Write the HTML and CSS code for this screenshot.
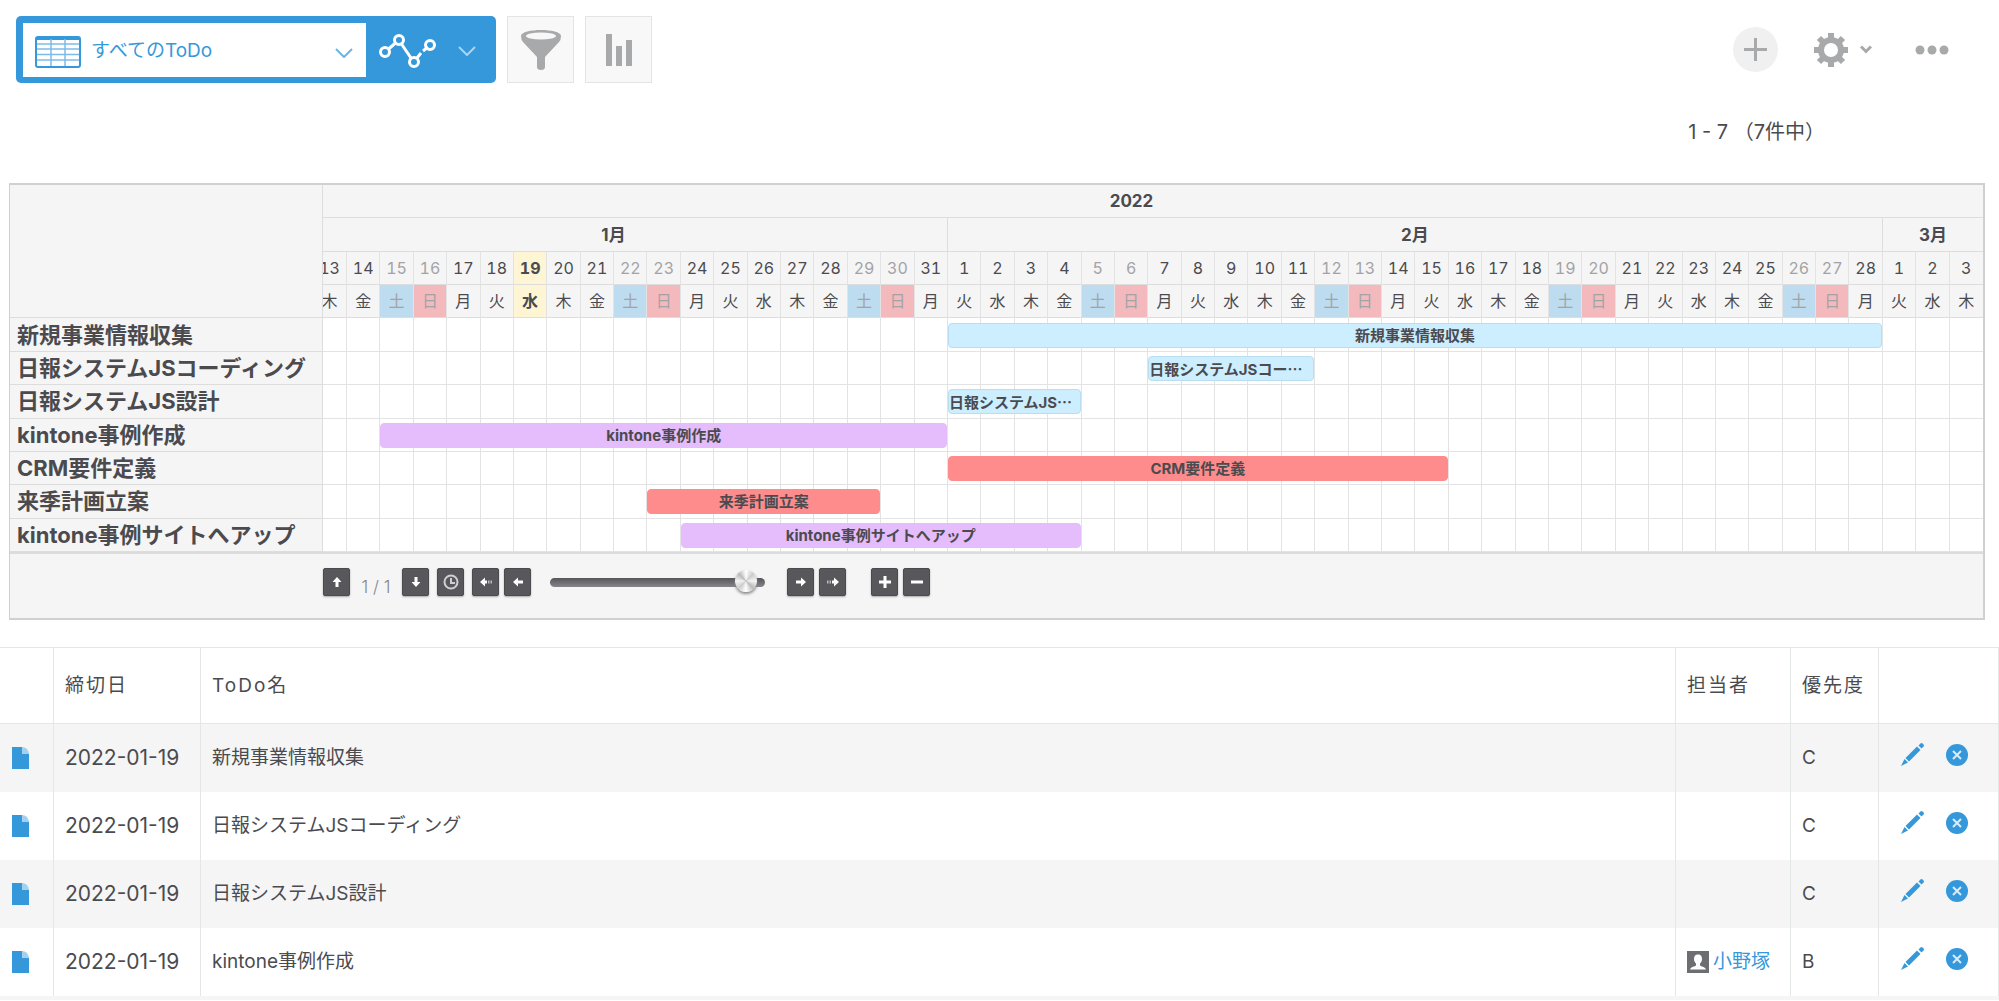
FILE: index.html
```html
<!DOCTYPE html>
<html lang="ja">
<head>
<meta charset="utf-8">
<title>すべてのToDo</title>
<link rel="stylesheet" href="styles.css">
</head>
<body>
<svg class="defs" aria-hidden="true">
  <symbol id="chevron" viewBox="0 0 18 10"><path d="M1 1l8 8 8-8" fill="none" stroke="currentColor" stroke-width="2"/></symbol>
  <symbol id="doc" viewBox="0 0 17 22"><path d="M0 0h10l7 7v15H0z" fill="#3498db"/><path d="M10 0q6 0 7 7h-7z" fill="#a5d1ef"/></symbol>
  <symbol id="pencil" viewBox="0 0 23 23"><g fill="#3498db"><path d="M17.500 2.500l2-2q1-1 2 0l1 1q1 1 0 2l-2 2z"/><path d="M16 3.500l3.500 3.500L8 18.500 4.500 15z"/><path d="M3.500 16l3.500 3.500L0 23z"/></g></symbol>
  <symbol id="delete" viewBox="0 0 22 22"><circle cx="11" cy="11" r="11" fill="#3498db"/><path d="M7 7l8 8M15 7l-8 8" stroke="#d9ecf9" stroke-width="2"/></symbol>
  <symbol id="arrow" viewBox="0 0 10 10"><path d="M5 0l4.500 5H6.500v5h-3V5H.5z" fill="#fff"/></symbol>
  <symbol id="arrow-dotted" viewBox="0 0 12 12"><path d="M6 0l4.500 5H7.500v2h-3V5H1.500z" fill="#fff"/><path d="M4.500 8h3v1.500h-3zM4.500 10.500h3V12h-3z" fill="#bbb"/></symbol>
</svg>

<header class="toolbar">
  <div class="view-box">
    <div class="view-picker">
      <svg class="view-icon" viewBox="0 0 46 32"><rect x="1" y="1" width="44" height="30" rx="2" fill="#fff" stroke="#3498db" stroke-width="2"/><path d="M2 3h42" stroke="#3498db" stroke-width="2"/><path d="M2 8h42M2 13h42M2 18.500h42M2 24h42M16 3v27M30 3v27" stroke="#7dbce8" stroke-width="1.500"/></svg>
      <select class="view-select" aria-label="一覧"><option>すべてのToDo</option></select>
      <svg class="chevron view-chevron"><use href="#chevron"/></svg>
    </div>
    <button class="graph-button" aria-label="グラフ">
      <svg width="57" height="34" viewBox="0 0 57 34" fill="none" stroke="#fff" stroke-width="3"><path d="M9 15.500l8-7M22.500 10l9.500 14M38 24l4-5M44 17l5-4"/><circle cx="6" cy="18" r="4.500"/><circle cx="20" cy="6" r="4.500"/><circle cx="35" cy="28" r="4.500"/><circle cx="51" cy="11" r="4.500"/></svg>
      <svg class="chevron"><use href="#chevron"/></svg>
    </button>
  </div>
  <button class="tool-button" aria-label="絞り込み">
    <svg width="40" height="40" viewBox="0 0 40 40"><path d="M0 6C0-2 40-2 40 6q0 4-2 6L24 27v10q0 3-4 3t-4-3V27L2 12Q0 10 0 6z" fill="#a8a9aa"/><ellipse cx="20" cy="6" rx="15" ry="3.500" fill="#f8f8f8"/></svg>
  </button>
  <button class="tool-button" aria-label="集計">
    <svg width="26" height="32" viewBox="0 0 26 32"><path d="M0 0h6v32H0zM10 12h6v20h-6zM20 6h6v26h-6z" fill="#a8a9aa"/></svg>
  </button>
  <div class="actions">
    <button class="add-button" aria-label="追加"><svg width="23" height="23" viewBox="0 0 23 23"><path d="M11.500 0v23M0 11.500h23" stroke="#a8a9aa" stroke-width="3"/></svg></button>
    <button class="plain-button" aria-label="設定">
      <svg width="34" height="34" viewBox="0 0 34 34"><g stroke="#a8a9aa" stroke-width="6"><path d="M17 0v34M0 17h34M5 5l24 24M29 5L5 29"/></g><circle cx="17" cy="17" r="13" fill="#a8a9aa"/><circle cx="17" cy="17" r="7" fill="#fff"/></svg>
      <svg width="12" height="9" viewBox="0 0 12 9"><path d="M1 1.500l5 5 5-5" fill="none" stroke="#a8a9aa" stroke-width="3"/></svg>
    </button>
    <button class="plain-button" aria-label="その他"><svg width="34" height="10" viewBox="0 0 34 10" fill="#a8a9aa"><circle cx="5" cy="5" r="4.500"/><circle cx="17" cy="5" r="4.500"/><circle cx="29" cy="5" r="4.500"/></svg></button>
  </div>
</header>

<p class="pager">1 - 7 （7件中）</p>

<section class="gantt">
  <div class="chart">
    <div class="corner"></div>
    <div class="period year">2022</div>
    <div class="period jan">1月</div>
    <div class="period feb">2月</div>
    <div class="period mar">3月</div>

    <div class="label r1">新規事業情報収集</div><div class="track r1"></div>
    <div class="label r2">日報システムJSコーディング</div><div class="track r2"></div>
    <div class="label r3">日報システムJS設計</div><div class="track r3"></div>
    <div class="label r4">kintone事例作成</div><div class="track r4"></div>
    <div class="label r5">CRM要件定義</div><div class="track r5"></div>
    <div class="label r6">来季計画立案</div><div class="track r6"></div>
    <div class="label r7">kintone事例サイトへアップ</div><div class="track r7"></div>

    <div class="days">
      <div class="day first"><span>13</span><span>木</span></div>
      <div class="day"><span>14</span><span>金</span></div>
      <div class="day sat"><span>15</span><span>土</span></div>
      <div class="day sun"><span>16</span><span>日</span></div>
      <div class="day"><span>17</span><span>月</span></div>
      <div class="day"><span>18</span><span>火</span></div>
      <div class="day today"><span>19</span><span>水</span></div>
      <div class="day"><span>20</span><span>木</span></div>
      <div class="day"><span>21</span><span>金</span></div>
      <div class="day sat"><span>22</span><span>土</span></div>
      <div class="day sun"><span>23</span><span>日</span></div>
      <div class="day"><span>24</span><span>月</span></div>
      <div class="day"><span>25</span><span>火</span></div>
      <div class="day"><span>26</span><span>水</span></div>
      <div class="day"><span>27</span><span>木</span></div>
      <div class="day"><span>28</span><span>金</span></div>
      <div class="day sat"><span>29</span><span>土</span></div>
      <div class="day sun"><span>30</span><span>日</span></div>
      <div class="day"><span>31</span><span>月</span></div>
      <div class="day"><span>1</span><span>火</span></div>
      <div class="day"><span>2</span><span>水</span></div>
      <div class="day"><span>3</span><span>木</span></div>
      <div class="day"><span>4</span><span>金</span></div>
      <div class="day sat"><span>5</span><span>土</span></div>
      <div class="day sun"><span>6</span><span>日</span></div>
      <div class="day"><span>7</span><span>月</span></div>
      <div class="day"><span>8</span><span>火</span></div>
      <div class="day"><span>9</span><span>水</span></div>
      <div class="day"><span>10</span><span>木</span></div>
      <div class="day"><span>11</span><span>金</span></div>
      <div class="day sat"><span>12</span><span>土</span></div>
      <div class="day sun"><span>13</span><span>日</span></div>
      <div class="day"><span>14</span><span>月</span></div>
      <div class="day"><span>15</span><span>火</span></div>
      <div class="day"><span>16</span><span>水</span></div>
      <div class="day"><span>17</span><span>木</span></div>
      <div class="day"><span>18</span><span>金</span></div>
      <div class="day sat"><span>19</span><span>土</span></div>
      <div class="day sun"><span>20</span><span>日</span></div>
      <div class="day"><span>21</span><span>月</span></div>
      <div class="day"><span>22</span><span>火</span></div>
      <div class="day"><span>23</span><span>水</span></div>
      <div class="day"><span>24</span><span>木</span></div>
      <div class="day"><span>25</span><span>金</span></div>
      <div class="day sat"><span>26</span><span>土</span></div>
      <div class="day sun"><span>27</span><span>日</span></div>
      <div class="day"><span>28</span><span>月</span></div>
      <div class="day"><span>1</span><span>火</span></div>
      <div class="day"><span>2</span><span>水</span></div>
      <div class="day"><span>3</span><span>木</span></div>
    </div>

    <div class="bar blue r1" style="grid-column: 21 / 49">新規事業情報収集</div>
    <div class="bar blue cut r2" style="grid-column: 27 / 32">日報システムJSコー<span class="dots">…</span></div>
    <div class="bar blue cut r3" style="grid-column: 21 / 25">日報システムJS<span class="dots">…</span></div>
    <div class="bar purple r4" style="grid-column: 4 / 21">kintone事例作成</div>
    <div class="bar red r5" style="grid-column: 21 / 36">CRM要件定義</div>
    <div class="bar red r6" style="grid-column: 12 / 19">来季計画立案</div>
    <div class="bar purple r7" style="grid-column: 13 / 25">kintone事例サイトへアップ</div>
  </div>

  <div class="nav">
    <button class="nav-button" aria-label="前のページ"><svg width="10" height="10"><use href="#arrow"/></svg></button>
    <span class="page-no">1 / 1</span>
    <button class="nav-button" aria-label="次のページ"><svg class="down" width="10" height="10"><use href="#arrow"/></svg></button>
    <button class="nav-button apart" aria-label="今日"><svg width="16" height="16" viewBox="0 0 16 16" fill="none" stroke="#d0d0d2" stroke-width="2"><circle cx="8" cy="8" r="6.500"/><path d="M8 4v5h4"/></svg></button>
    <button class="nav-button apart" aria-label="前の週"><svg class="left" width="12" height="12"><use href="#arrow-dotted"/></svg></button>
    <button class="nav-button" aria-label="前の日"><svg class="left" width="10" height="10"><use href="#arrow"/></svg></button>
    <input class="slider" type="range" min="0" max="100" value="96" aria-label="表示位置">
    <button class="nav-button" aria-label="次の日"><svg class="right" width="10" height="10"><use href="#arrow"/></svg></button>
    <button class="nav-button" aria-label="次の週"><svg class="right" width="12" height="12"><use href="#arrow-dotted"/></svg></button>
    <button class="nav-button zoom-in" aria-label="拡大"><svg width="12" height="12" viewBox="0 0 12 12"><path d="M6 0v12M0 6h12" stroke="#fff" stroke-width="3"/></svg></button>
    <button class="nav-button" aria-label="縮小"><svg width="12" height="12" viewBox="0 0 12 12"><path d="M0 6h12" stroke="#fff" stroke-width="3"/></svg></button>
  </div>
</section>

<table class="records">
  <colgroup><col class="c-doc"><col class="c-date"><col><col class="c-user"><col class="c-rank"><col class="c-edit"></colgroup>
  <thead>
    <tr><th></th><th>締切日</th><th>ToDo名</th><th>担当者</th><th>優先度</th><th></th></tr>
  </thead>
  <tbody>
    <tr>
      <td class="doc"><a href="#r7" aria-label="詳細"><svg width="17" height="22"><use href="#doc"/></svg></a></td>
      <td class="date">2022-01-19</td><td>新規事業情報収集</td><td></td><td>C</td>
      <td><div class="row-tools"><button class="plain-button" aria-label="編集"><svg width="23" height="23"><use href="#pencil"/></svg></button><button class="plain-button" aria-label="削除"><svg width="22" height="22"><use href="#delete"/></svg></button></div></td>
    </tr>
    <tr>
      <td class="doc"><a href="#r6" aria-label="詳細"><svg width="17" height="22"><use href="#doc"/></svg></a></td>
      <td class="date">2022-01-19</td><td>日報システムJSコーディング</td><td></td><td>C</td>
      <td><div class="row-tools"><button class="plain-button" aria-label="編集"><svg width="23" height="23"><use href="#pencil"/></svg></button><button class="plain-button" aria-label="削除"><svg width="22" height="22"><use href="#delete"/></svg></button></div></td>
    </tr>
    <tr>
      <td class="doc"><a href="#r5" aria-label="詳細"><svg width="17" height="22"><use href="#doc"/></svg></a></td>
      <td class="date">2022-01-19</td><td>日報システムJS設計</td><td></td><td>C</td>
      <td><div class="row-tools"><button class="plain-button" aria-label="編集"><svg width="23" height="23"><use href="#pencil"/></svg></button><button class="plain-button" aria-label="削除"><svg width="22" height="22"><use href="#delete"/></svg></button></div></td>
    </tr>
    <tr>
      <td class="doc"><a href="#r4" aria-label="詳細"><svg width="17" height="22"><use href="#doc"/></svg></a></td>
      <td class="date">2022-01-19</td><td>kintone事例作成</td>
      <td><a class="user" href="#user"><svg width="22" height="22" viewBox="0 0 22 22"><path d="M0 0h22v22H0z" fill="#6d6e72"/><path d="M11 3.500c3 0 4 2 4 4.500 0 2-1 3.500-2 4.500v2c1 1 5 1 6 4H3c1-3 5-3 6-4v-2C8 11.500 7 10 7 8c0-2.500 1-4.500 4-4.500z" fill="#fff"/></svg>小野塚</a></td>
      <td>B</td>
      <td><div class="row-tools"><button class="plain-button" aria-label="編集"><svg width="23" height="23"><use href="#pencil"/></svg></button><button class="plain-button" aria-label="削除"><svg width="22" height="22"><use href="#delete"/></svg></button></div></td>
    </tr>
  </tbody>
</table>
</body>
</html>
```
FILE: styles.css
```css
* { box-sizing: border-box; }

body {
  margin: 0;
  background: #fff;
  color: #4b4b4f;
  font: 19px/28px Inter, "Noto Sans CJK JP", sans-serif;
}

button, select {
  margin: 0;
  padding: 0;
  border: 0;
  background: none;
  color: inherit;
  font: inherit;
}

svg { display: block; flex: none; }
a { color: #3498db; text-decoration: none; }
.defs { position: absolute; width: 0; height: 0; }

/* toolbar */
.toolbar {
  display: flex;
  padding: 16px 50px 0 16px;
}

.view-box {
  display: flex;
  width: 480px;
  height: 67px;
  padding: 7px 0 6px 7px;
  border-radius: 5px;
  background: #3498db;
}

.view-picker { position: relative; width: 343px; background: #fff; }

.view-select {
  width: 100%;
  height: 100%;
  padding: 2px 0 0 68px;
  appearance: none;
  color: #3498db;
}

.view-icon {
  position: absolute;
  top: 13px;
  left: 12px;
  width: 46px;
  height: 32px;
  pointer-events: none;
}

.chevron { width: 18px; height: 10px; color: #a9d5f3; }
.view-chevron { position: absolute; top: 25px; right: 13px; color: #6bb4e5; pointer-events: none; }

.graph-button {
  display: flex;
  flex: 1;
  align-items: center;
  gap: 22px;
  padding: 2px 0 0 13px;
}

.tool-button {
  display: flex;
  align-items: center;
  justify-content: center;
  width: 67px;
  height: 67px;
  margin-left: 11px;
  border: 1px solid #e4e4e4;
  background: #f8f8f8;
}

.actions {
  display: flex;
  align-items: center;
  gap: 36px;
  margin-left: auto;
}

.actions .plain-button:last-child { margin-left: 7px; }

.add-button {
  display: flex;
  align-items: center;
  justify-content: center;
  width: 45px;
  height: 45px;
  border-radius: 50%;
  background: #f0f0f0;
}

.plain-button { display: flex; align-items: center; gap: 12px; }

.pager { margin: 35px 174px 37px 0; font-size: 20px; text-align: right; }

/* gantt chart */
.gantt {
  margin: 0 14px 27px 9px;
  border: 2px solid #d0d0d0;
  border-left-width: 1px;
  background: #f5f5f5;
}

.chart {
  display: grid;
  grid-template-columns: 313px 24px repeat(49, minmax(0, 1fr));
  grid-template-rows: repeat(11, minmax(0, 1fr));
  min-height: 369px;
  border-bottom: 2px solid #dcdcdc;
}

.corner {
  grid-area: 1 / 1 / 5 / 2;
  border-right: 1px solid #ddd;
  border-bottom: 1px solid #ddd;
}

.period {
  display: flex;
  align-items: center;
  justify-content: center;
  border-right: 1px solid #ddd;
  border-bottom: 1px solid #ddd;
  font-size: 17px;
  font-weight: 700;
}

/* the year and January start before the visible range */
.year, .jan { padding-right: 43px; }
.year { grid-area: 1 / 2 / 2 / -1; border-right: 0; }
.jan { grid-area: 2 / 2 / 3 / 21; }
.feb { grid-area: 2 / 21 / 3 / 49; }
.mar { grid-area: 2 / 49 / 3 / -1; border-right: 0; }

.r1 { grid-row: 5; }
.r2 { grid-row: 6; }
.r3 { grid-row: 7; }
.r4 { grid-row: 8; }
.r5 { grid-row: 9; }
.r6 { grid-row: 10; }
.r7 { grid-row: 11; }

.label {
  grid-column: 1;
  display: flex;
  align-items: center;
  padding-left: 7px;
  border-right: 1px solid #ddd;
  border-bottom: 1px solid #ddd;
  font-size: 22px;
  font-weight: 700;
  white-space: nowrap;
}

.track {
  grid-column: 2 / -1;
  border-bottom: 1px solid #e3e3e3;
  background: #fff;
}

/* one element per day: two header cells, then the column line down the rows */
.days {
  grid-area: 3 / 2 / 12 / -1;
  display: grid;
  grid-template-rows: subgrid;
  grid-template-columns: subgrid;
}

.day {
  grid-row: 1 / -1;
  display: grid;
  grid-template-rows: subgrid;
  border-right: 1px solid #e3e3e3;
  font-size: 16px;
  font-variant-numeric: tabular-nums;
}

.day:last-child { border-right: 0; }

.day span {
  display: flex;
  align-items: center;
  justify-content: center;
  border-bottom: 1px solid #ddd;
}

.day.first { overflow: hidden; justify-content: end; grid-template-columns: 33px; }
.sat, .sun { color: #a3a3a5; }
.sat span:last-child { background: #bedcf0; }
.sun span:last-child { background: #f4b9bd; }
.today { font-weight: 700; }
.today span { background: #fdf5d4; }

.bar {
  align-self: center;
  height: 25px;
  margin-right: 1px;
  border: 1px solid;
  border-radius: 4px;
  font-size: 15px;
  font-weight: 700;
  line-height: 23px;
  text-align: center;
  white-space: nowrap;
}

.blue { border-color: #b9def2; background: #cef; }
.purple { border-color: #e5bdfd; background: #e5bdfd; }
.red { border-color: #ff8c8c; background: #ff8c8c; }
.cut { text-align: left; }
.dots { font-family: "Noto Sans CJK JP", sans-serif; }

/* chart navigation */
.nav {
  display: flex;
  align-items: center;
  gap: 5px;
  padding: 14px 0 22px 313px;
}

.nav-button {
  display: flex;
  align-items: center;
  justify-content: center;
  width: 27px;
  height: 28px;
  border: 1px solid #4b4b4f;
  border-radius: 2px;
  background: #58585c;
  box-shadow: 0 1px 2px #aaa;
}

.apart { margin-left: 3px; }
.zoom-in { margin-left: 20px; }
.down { transform: rotate(180deg); }
.left { transform: rotate(-90deg); }
.right { transform: rotate(90deg); }

.page-no {
  width: 42px;
  padding-top: 10px;
  color: #85858a;
  font-size: 17px;
  font-weight: 300;
  line-height: 18px;
  text-align: center;
}

.slider {
  width: 215px;
  height: 24px;
  margin: 0 17px 0 14px;
  appearance: none;
  background: none;
}

.slider::-webkit-slider-runnable-track {
  height: 9px;
  border-radius: 5px;
  background: linear-gradient(#55555a, #85858a);
}

.slider::-webkit-slider-thumb {
  width: 22px;
  height: 22px;
  margin-top: -8px;
  appearance: none;
  border-radius: 50%;
  background: conic-gradient(#fff, #ccc, #f4f4f4, #bbb, #fff, #ccc, #f4f4f4, #bbb, #fff);
  box-shadow: 0 2px 3px #888;
}

/* record list */
.records {
  width: 100%;
  border-collapse: separate;
  border-spacing: 0;
  border-top: 1px solid #e3e7e8;
  border-bottom: 4px solid #f5f5f5;
  table-layout: fixed;
}

.c-doc { width: 54px; }
.c-date { width: 147px; }
.c-user { width: 115px; }
.c-rank { width: 88px; }
.c-edit { width: 120px; }

.records th, .records td {
  padding: 0 0 0 11px;
  border-right: 1px solid #e3e7e8;
  text-align: left;
  white-space: nowrap;
}

.records th {
  height: 76px;
  border-bottom: 1px solid #e3e7e8;
  font-weight: 400;
  letter-spacing: 2px;
}

.records td { height: 68px; }
.records tbody tr:nth-child(odd) { background: #f5f5f5; }
.records .doc { padding-left: 12px; }
.records .date { font-size: 21px; }
.user { display: flex; align-items: center; gap: 4px; }

.row-tools {
  display: flex;
  gap: 22px;
  padding: 0 0 7px 11px;
}
```
